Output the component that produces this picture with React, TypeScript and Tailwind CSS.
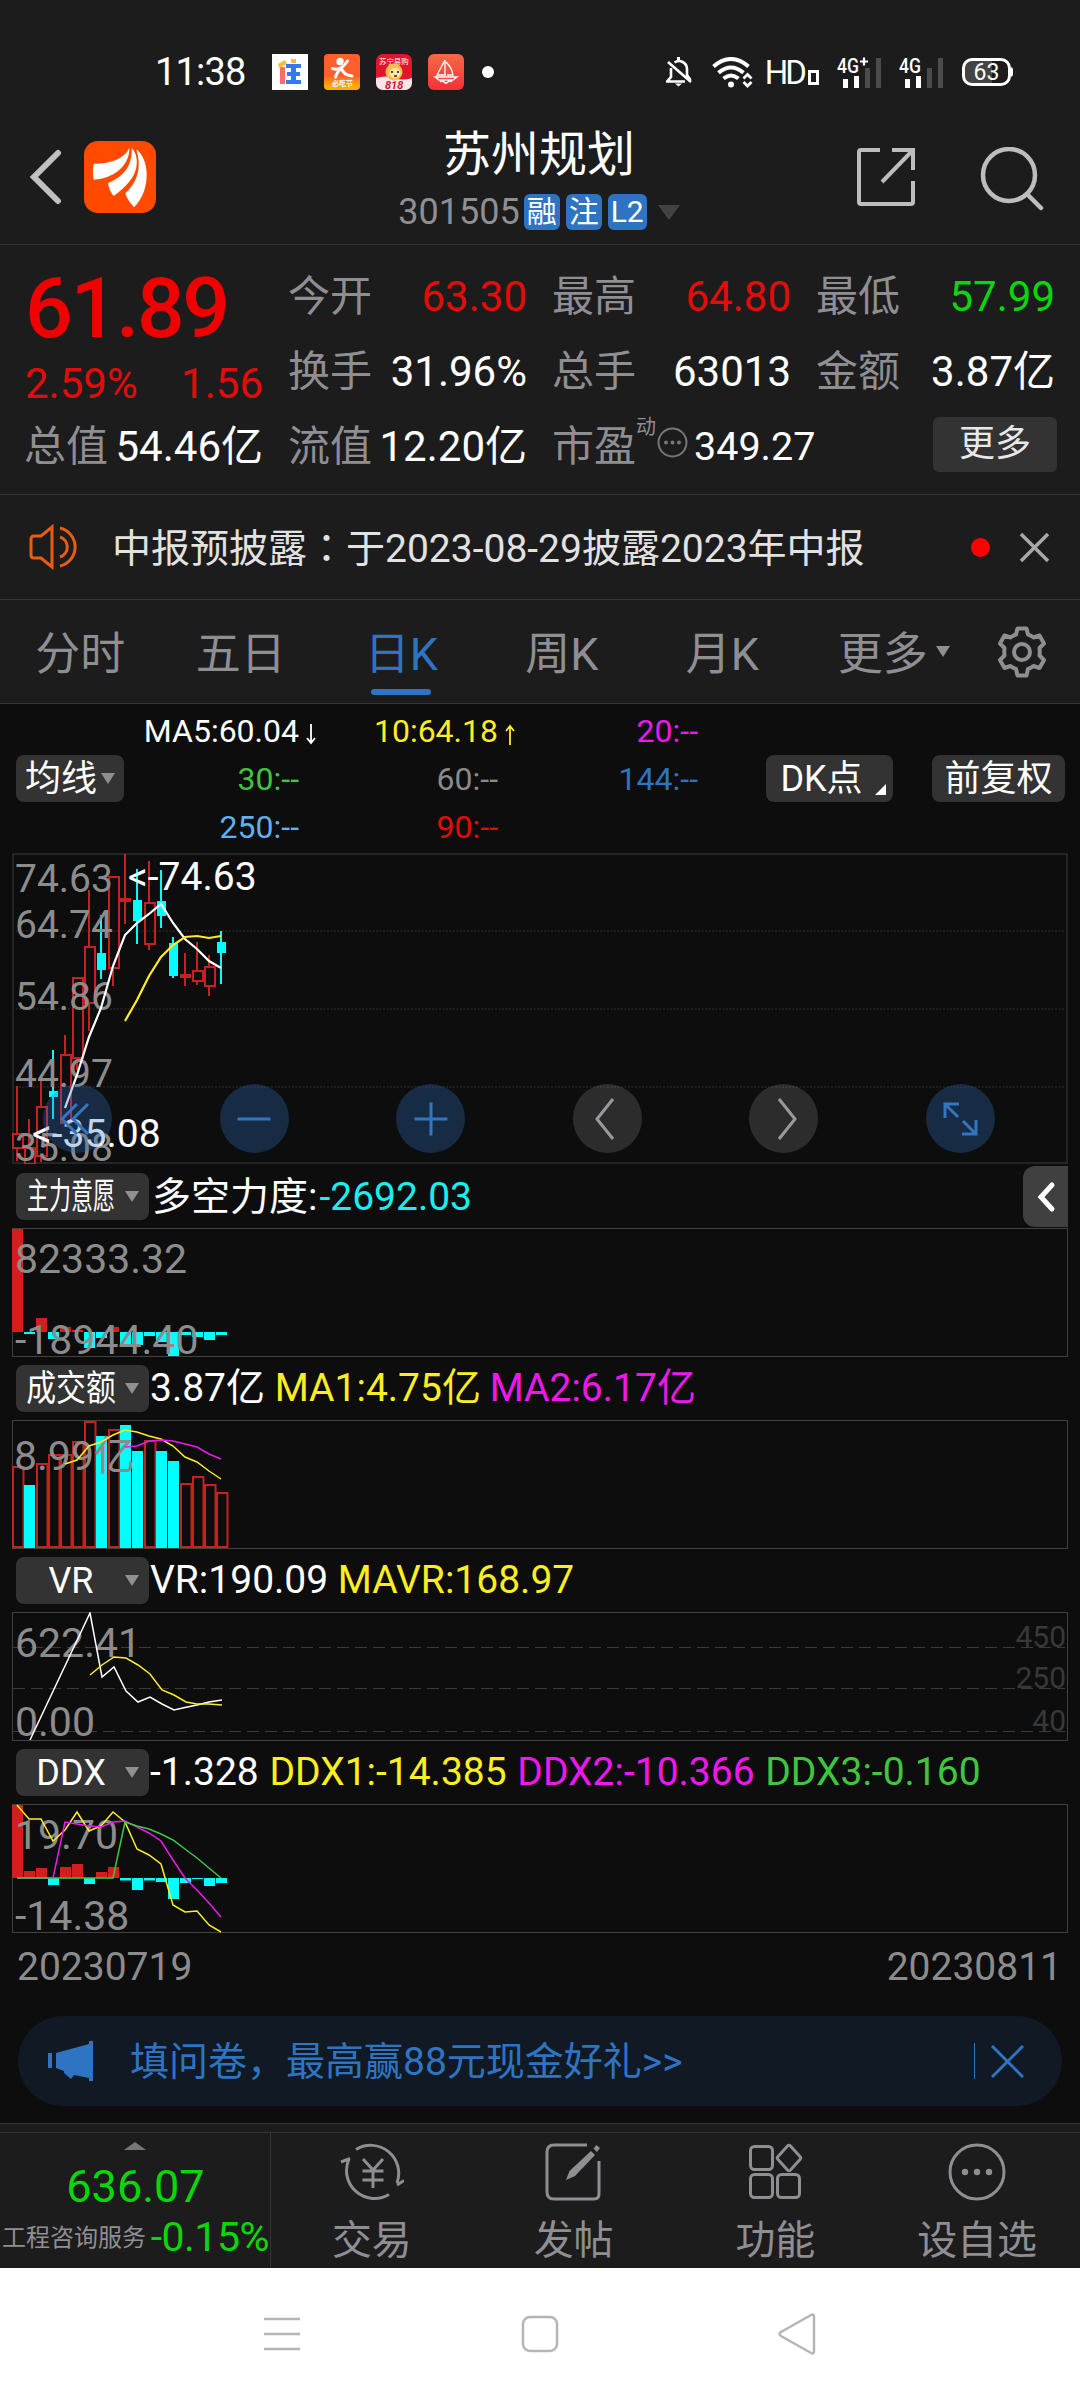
import type { ReactNode } from "react";

type Bar = { up: boolean; h: number };

// [high, low, top, bottom, kind]
const candles: [number, number, number, number, "up" | "down" | "flat"][] = [
  [233, 308, 280, 295, "up"],
  [266, 311, 294, 311, "up"],
  [228, 309, 253, 303, "up"],
  [197, 266, 238, 244, "down"],
  [182, 270, 201, 270, "up"],
  [124, 217, 124, 205, "up"],
  [37, 178, 93, 150, "up"],
  [62, 126, 100, 117, "down"],
  [23, 133, 23, 115, "up"],
  [1, 71, 45, 49, "flat"],
  [16, 91, 47, 68, "down"],
  [8, 97, 49, 91, "up"],
  [17, 75, 48, 63, "down"],
  [84, 125, 90, 123, "down"],
  [100, 133, 121, 125, "flat"],
  [89, 132, 117, 128, "up"],
  [102, 143, 113, 133, "up"],
  [78, 131, 89, 100, "down"],
];

const ma5 = [255, 222, 184, 155, 113, 82, 70, 61, 51, 70, 86, 96, 108, 115];
const ma10 = [168, 147, 123, 104, 92, 84, 83, 85, 83];

const force = [103, -2, 14, -7, 5, 2, -16, -6, 5, -13, -13, -4, -10, -24, -3, -5, -8, -3];
const ddx = [73, 7, 10, -7, 11, 14, -6, 6, 11, -2.5, -12, -2.5, -4, -21, -5, -1, -8, -5];

const amount: Bar[] = [
  { up: true, h: 46 },
  { up: false, h: 65 },
  { up: true, h: 43 },
  { up: true, h: 34 },
  { up: true, h: 34 },
  { up: true, h: 21 },
  { up: true, h: 1 },
  { up: false, h: 16 },
  { up: true, h: 9 },
  { up: false, h: 5 },
  { up: false, h: 31 },
  { up: true, h: 20 },
  { up: false, h: 31 },
  { up: false, h: 41 },
  { up: true, h: 63 },
  { up: true, h: 56 },
  { up: true, h: 64 },
  { up: true, h: 72 },
];

// one trading day is 12px wide
const line = (ys: number[], start: number) =>
  ys.map((y, i) => `${5 + (start + i) * 12},${y}`).join(" ");

function Tri({ className = "" }: { className?: string }) {
  return (
    <svg viewBox="0 0 14 11" className={`h-[11px] w-[14px] ${className}`}>
      <path d="M0 0h14L7 11z" fill="currentColor" />
    </svg>
  );
}

function StatusBar() {
  return (
    <div className="flex h-[144px] items-center justify-between pr-[69px] pl-[155px] text-white">
      <div className="flex items-center">
        <span className="w-[117px] text-[38px] leading-none tracking-[-0.8px]">
          11:38
        </span>
        <div className="flex items-center gap-4">
          <svg width="36" height="36" viewBox="0 0 36 36">
            <path d="M0 0h36v36H0z" fill="#fff" />
            <path d="M8 13h5v17H8z" fill="#ff6b6b" />
            <path d="m6 10 7-4 2 4-8 4zM19 5h5v4h-5z" fill="#ffb938" />
            <path
              d="M14 10h15v4h-5v4h4v4h-4v4h5v4H14v-4h5v-4h-4v-4h4v-4h-5z"
              fill="#3578f6"
            />
          </svg>
          <svg width="36" height="36" viewBox="0 0 36 36">
            <defs>
              <linearGradient id="eat" x1="0" y1="0" x2="0" y2="1">
                <stop offset=".6" stopColor="#ff5f2c" />
                <stop offset=".9" stopColor="#ffae00" />
              </linearGradient>
            </defs>
            <rect width="36" height="36" rx="4" fill="url(#eat)" />
            <circle cx="16" cy="7.5" r="3.7" fill="#fff" />
            <path
              d="M8.500 14.500q8 3 15-7.500M11.500 23q2-6 6-8.500 2 6.500 10.500 7.500"
              fill="none"
              stroke="#fff"
              strokeWidth="3"
              strokeLinecap="round"
            />
            <text x="8" y="32" fontSize="7" fontWeight="700" fill="#fff">
              必吃节
            </text>
          </svg>
          <svg width="36" height="36" viewBox="0 0 36 36">
            <rect width="36" height="36" rx="7" fill="#e3152c" />
            <path d="M0 24q9-3 18 0t18 0v5a7 7 0 0 1-7 7H7a7 7 0 0 1-7-7z" fill="#fde4ea" />
            <text x="3" y="9.5" fontSize="7.4" fill="#fff">
              苏宁易购
            </text>
            <circle cx="18" cy="18" r="8.5" fill="#f5c04c" />
            <ellipse cx="19" cy="19" rx="5.5" ry="5" fill="#ffe6b0" />
            <path d="M16 17v2M22 17v2M18 22h3" stroke="#3a1c10" strokeWidth="1.6" />
            <text x="9" y="35" fontSize="11" fontWeight="700" fontStyle="italic" fill="#d5162f">
              818
            </text>
          </svg>
          <svg width="36" height="36" viewBox="0 0 36 36">
            <defs>
              <linearGradient id="sail" x1="0" y1="0" x2="0" y2="1">
                <stop stopColor="#f46a45" />
                <stop offset="1" stopColor="#f5303a" />
              </linearGradient>
            </defs>
            <rect width="36" height="36" rx="6" fill="url(#sail)" />
            <path
              d="M17 6v15M17 6l-8 15h9M18 8q6 6 7 13h-6M7 23h22l-4 3H11zM12 28q2-2 4 0t4 0 4 0"
              fill="none"
              stroke="#fff"
              strokeWidth="1.3"
            />
          </svg>
        </div>
        <i className="ml-[18px] size-3 rounded-full bg-white" />
      </div>
      <div className="flex items-center">
        <svg width="26" height="30" viewBox="0 0 26 30" fill="none" stroke="#fff" strokeWidth="2.6">
          <path d="M8.5 5.5A8 8 0 0 1 21 12v6l3.500 5M5 11v9l-4 4.500h18M2 5l23 20" />
          <path d="M12.500 0v4" strokeWidth="3" />
          <path d="M9 26.500h7l-3.500 3z" fill="#fff" stroke="none" />
        </svg>
        <svg className="ml-[20px]" width="41" height="31" viewBox="0 0 41 31" fill="none" stroke="#fff" strokeWidth="4">
          <path d="M1.500 9.500q17.500-15 35 0M6.500 15.800q12.500-10.500 25 0M11.500 21.500q7.500-6 15 0" />
          <circle cx="19" cy="27.500" r="3" fill="#fff" stroke="none" />
          <path d="m31.500 21.500 4-4 4 4M31.500 25l4 4 4-4" strokeWidth="2.800" />
        </svg>
        <span className="ml-[12px] text-[33px] leading-none tracking-[-3px]">
          HD
        </span>
        <i className="mt-[10px] ml-[4px] h-[15px] w-[11px] border-[3.5px] border-white" />
        <Signal label="4G" plus />
        <Signal label="4G" />
        <div className="relative ml-[19px] flex h-[28px] w-[49px] items-center justify-center rounded-[10px] border-[3px] border-white bg-[linear-gradient(90deg,#444_62%,transparent_62%)] text-[23px] leading-none">
          63
          <i className="absolute -right-[5px] h-[10px] w-[3px] rounded-r bg-white" />
        </div>
      </div>
    </div>
  );
}

function Signal({ label, plus }: { label: string; plus?: boolean }) {
  return (
    <svg className="ml-[18px]" width="44" height="32" viewBox="0 0 44 32">
      <text x="0" y="17" fontSize="20" fontWeight="500" fill="#fff" textLength="22" lengthAdjust="spacingAndGlyphs">
        {label}
      </text>
      {plus && <path d="M23 5.500h8M27 1.500v8" stroke="#fff" strokeWidth="2.200" />}
      <path d="M8.500 23v9M19.500 20v12" stroke="#fff" strokeWidth="5" />
      <path d="M30.500 12v20M41.500 2v30" stroke="#4b4b4b" strokeWidth="5" />
    </svg>
  );
}

function Header() {
  return (
    <div className="flex h-[101px] items-center justify-between border-b border-[#343434] pr-9 pl-[29px]">
      <div className="flex w-[229px] items-center pb-[35px]">
        <svg width="33" height="56" viewBox="0 0 33 56">
          <path
            d="M29 4 5 28l24 24"
            fill="none"
            stroke="#c0c0c0"
            strokeWidth="6"
            strokeLinecap="round"
          />
        </svg>
        <svg className="ml-[22px]" width="72" height="72" viewBox="0 0 216 216">
          <rect width="216" height="216" rx="42" fill="#ff4a00" />
          <path
            d="M29 68C75 68 120 56 136 20c2 50-42 92-107 96-3-17-3-32 0-48zM143 21c14 14 18 36 14 58-6 32-30 58-68 86-10-12-15-25-17-39 45-18 74-50 71-105zM157 25c18 14 30 40 31 72 1 38-10 74-38 102-12-14-22-26-26-42 36-32 50-76 33-132z"
            fill="#fff"
          />
        </svg>
      </div>
      <div className="flex flex-col items-center pr-[2px] pb-[31px]">
        <h1 className="text-[48px] leading-[56px] text-white">苏州规划</h1>
        <div className="mt-[11px] flex items-center leading-none">
          <span className="text-[36px] text-[#8e8e93]">301505</span>
          <span className="ml-[4px] flex gap-[6px] text-[30px] text-white">
            <b className="flex h-[36px] w-[36px] items-center justify-center rounded-md bg-[#2e74c2] font-normal">
              融
            </b>
            <b className="flex h-[36px] w-[36px] items-center justify-center rounded-md bg-[#2e74c2] font-normal">
              注
            </b>
            <b className="flex h-[36px] w-[39px] items-center justify-center rounded-md bg-[#2e74c2] font-normal">
              L2
            </b>
          </span>
          <svg className="ml-[11px]" width="22" height="15" viewBox="0 0 22 15">
            <path d="M0 0h22L11 15z" fill="#424242" />
          </svg>
        </div>
      </div>
      <div className="flex w-[222px] items-center justify-end gap-[65px] pb-[35px]">
        <svg width="58" height="58" viewBox="0 0 58 58" fill="none" stroke="#bdbdbd" strokeWidth="4">
          <path d="M23 2H4Q2 2 2 4v50q0 2 2 2h50q2 0 2-2V33M35 2h21v20M56 2 25 34" />
        </svg>
        <svg className="mt-[4px]" width="64" height="64" viewBox="0 0 64 64" fill="none" stroke="#bdbdbd" strokeWidth="4.500">
          <circle cx="29" cy="28" r="26" />
          <path d="m47 47 14 14" strokeLinecap="round" />
        </svg>
      </div>
    </div>
  );
}

function Cell({
  label,
  value,
  color = "text-white",
}: {
  label: string;
  value: string;
  color?: string;
}) {
  return (
    <div className="flex h-[75px] items-center justify-between whitespace-nowrap">
      <span className="-ml-px text-[#8e8e93]">{label}</span>
      <span className={color}>{value}</span>
    </div>
  );
}

function Quote() {
  return (
    <div className="grid h-[250px] grid-cols-4 content-start gap-x-[26px] border-b border-[#343434] px-[25px] pt-[14px] text-[42px] leading-none">
      <div className="row-span-2 flex flex-col text-[#e30c0c]">
        <span className="pt-[8px] text-[84px] font-medium tracking-[-2.3px] text-[#f00000]">
          61.89
        </span>
        <div className="mt-[12px] flex justify-between">
          <span>2.59%</span>
          <span>1.56</span>
        </div>
      </div>
      <Cell label="今开" value="63.30" color="text-[#e30c0c]" />
      <Cell label="最高" value="64.80" color="text-[#e30c0c]" />
      <Cell label="最低" value="57.99" color="text-[#0bd60b]" />
      <Cell label="换手" value="31.96%" />
      <Cell label="总手" value="63013" />
      <Cell label="金额" value="3.87亿" />
      <Cell label="总值" value="54.46亿" />
      <Cell label="流值" value="12.20亿" />
      <div className="flex h-[75px] items-center whitespace-nowrap">
        <span className="-ml-px text-[#8e8e93]">市盈</span>
        <span className="-mt-[40px] text-[20px] text-[#8e8e93]">动</span>
        <svg className="-mt-[8px] ml-[1px] shrink-0" width="31" height="31" viewBox="0 0 31 31" fill="#77777b">
          <circle cx="15.500" cy="15.500" r="14" fill="none" stroke="#77777b" strokeWidth="2" />
          <circle cx="9" cy="15.500" r="2" />
          <circle cx="15.500" cy="15.500" r="2" />
          <circle cx="22" cy="15.500" r="2" />
        </svg>
        <span className="ml-[6px] text-[39.500px] text-white">349.27</span>
      </div>
      <div className="flex h-[75px] items-center justify-end">
        <button className="-mt-[5px] -mr-[2px] h-[55px] w-[124px] rounded-md bg-[#333] text-[36px] leading-none text-[#e8e8e8]">
          更多
        </button>
      </div>
    </div>
  );
}

function Notice() {
  return (
    <div className="flex h-[105px] items-center border-b border-[#343434] pr-[30px] pl-[29px]">
      <svg width="52" height="46" viewBox="0 0 52 46" fill="none" stroke="#e85d10" strokeWidth="3">
        <path d="M23 3v40L12 34H5q-3 0-3-3V15q0-3 3-3h7zM31 4a19.500 19.500 0 0 1 0 38M31 13a10.500 10.500 0 0 1 0 20" />
      </svg>
      <span className="ml-[31px] flex-1 text-[39px] leading-none text-[#e2e2e2]">
        中报预披露<span className="font-['Noto_Sans_CJK_TC']">：</span>
        于2023-08-29披露2023年中报
      </span>
      <i className="size-[19px] rounded-full bg-[#ff0000]" />
      <svg className="ml-[29px]" width="31" height="31" viewBox="0 0 31 31">
        <path d="m2 2 27 27M29 2 2 29" stroke="#a8a8a8" strokeWidth="3.500" />
      </svg>
    </div>
  );
}

function Tabs() {
  return (
    <div className="flex h-[104px] items-center border-b border-[#343434] text-[45px] leading-none text-[#8e8e93]">
      {["分时", "五日", "日K", "周K", "月K", "更多"].map((t) => (
        <div
          key={t}
          className={`relative flex h-full w-[160.500px] items-center justify-center pt-[5px] ${t === "日K" ? "text-[#2e74c2]" : ""}`}
        >
          {t}
          {t === "日K" && (
            <i className="absolute bottom-[8px] h-[6px] w-[60px] rounded-full bg-[#2e74c2]" />
          )}
          {t === "更多" && <Tri className="absolute right-[13px] bottom-[46px]" />}
        </div>
      ))}
      <svg className="ml-[33px]" width="52" height="52" viewBox="0 0 52 52" fill="none" stroke="#8e8e93" strokeWidth="4" strokeLinejoin="round">
        <path d="M21.500 2.500h9l1.500 6q3 1 5.500 3l6-2 4.500 8-4.500 4.500q.5 4 0 7.500l4.500 4.500-4.500 8-6-2q-2.500 2-5.500 3l-1.500 6.500h-9l-1.500-6.500q-3-1-5.500-3l-6 2-4.500-8L8.500 29.500q-.5-4 0-7.500L4 17.500l4.500-8 6 2q2.500-2 5.500-3z" />
        <circle cx="26" cy="26" r="8" />
      </svg>
    </div>
  );
}

function Arrow({ up }: { up?: boolean }) {
  return (
    <svg
      className="absolute top-[17px] left-full ml-[7px]"
      width="10"
      height="21"
      viewBox="0 0 10 21"
      fill="none"
      stroke="currentColor"
      strokeWidth="1.800"
    >
      <path d={up ? "M5 21V2M1 7l4-5 4 5" : "M5 0v19M1 14l4 5 4-5"} />
    </svg>
  );
}

function Legend() {
  return (
    <div className="flex h-[149px] items-center pl-4 leading-none text-white">
      <button className="flex h-[47px] w-[108px] items-center rounded-lg bg-[#333] pl-[9px] text-[36px] leading-none">
        均线
        <Tri className="ml-[4px] text-[#8e8e93]" />
      </button>
      <div className="grid grid-cols-[175px_199px_200px] text-right text-[32px] leading-[48px]">
        <span className="relative">
          MA5:60.04
          <Arrow />
        </span>
        <span className="relative text-[#fcee21]">
          10:64.18
          <Arrow up />
        </span>
        <span className="text-[#ee18ee]">20:--</span>
        <span className="text-[#3fc63f]">30:--</span>
        <span className="text-[#8a8a8a]">60:--</span>
        <span className="text-[#2e74c2]">144:--</span>
        <span className="text-[#5fb0f0]">250:--</span>
        <span className="text-[#e30c0c]">90:--</span>
      </div>
      <button className="relative ml-[68px] h-[47px] w-[127px] rounded-lg bg-[#333] pr-[16px] text-[36px] leading-none">
        DK点
        <svg className="absolute right-[7px] bottom-[7px]" width="11" height="11" viewBox="0 0 11 11">
          <path d="M11 0v11H0z" fill="#fff" />
        </svg>
      </button>
      <button className="ml-[39px] h-[47px] w-[133px] rounded-lg bg-[#333] text-[36px] leading-none">
        前复权
      </button>
    </div>
  );
}

function Round({ blue, d }: { blue?: boolean; d: string }) {
  return (
    <button
      className={`flex size-[69px] items-center justify-center rounded-full ${blue ? "bg-[#2e74c2]/30 text-[#3375bf]" : "bg-white/13 text-[#9a9a9e]"}`}
    >
      <svg width="42" height="42" viewBox="0 0 42 42" fill="none" stroke="currentColor" strokeWidth="3">
        <path d={d} />
      </svg>
    </button>
  );
}

function KChart() {
  return (
    <div className="relative mx-3 h-[311px]">
      <svg className="block text-[39px]" width="1056" height="311" viewBox="0 0 1056 311">
        <rect x="1" y="1" width="1054" height="309" fill="none" stroke="#242424" strokeWidth="2" />
        <path
          d="M0 78h1056M0 156h1056M0 234h1056"
          stroke="#242424"
          strokeWidth="1.500"
          strokeDasharray="2 1.500"
        />
        {candles.map(([hi, lo, top, bot, kind], i) => {
          const x = 5 + i * 12;
          if (kind === "up")
            return (
              <g key={i} stroke="#c72020" strokeWidth="2" fill="none">
                <path d={`M${x} ${hi}V${top}M${x} ${bot}V${lo}`} />
                <rect x={x - 4} y={top + 1} width="10" height={bot - top - 1} />
              </g>
            );
          return (
            <g key={i} fill={kind === "flat" ? "#c72020" : "#00ffff"}>
              <rect x={x - 1} y={hi} width="2" height={lo - hi} />
              <rect x={x - (kind === "flat" ? 5 : 4)} y={top} width={kind === "flat" ? 11 : 9} height={bot - top} />
            </g>
          );
        })}
        <g fill="#8c8c8c">
          <text x="3" y="39">74.63</text>
          <text x="3" y="85">64.74</text>
          <text x="3" y="157">54.86</text>
          <text x="3" y="234">44.97</text>
          <text x="3" y="308">35.08</text>
        </g>
        <polyline points={line(ma5, 4)} fill="none" stroke="#fff" strokeWidth="2.200" />
        <polyline points={line(ma10, 9)} fill="none" stroke="#fcee21" strokeWidth="2.200" />
        <text x="116" y="37" fill="#fff">&lt;-74.63</text>
        <text x="20" y="294" fill="#fff">&lt;-35.08</text>
      </svg>
      <div className="absolute top-[231px] right-[73px] left-[31px] flex justify-between">
        <Round blue d="M20 6 5 21l15 15M31 6 16 21l15 15" />
        <Round blue d="M4.500 21h33" />
        <Round blue d="M4.500 21h33M21 4.500v33" />
        <Round d="M27 1 11 21 27 41" />
        <Round d="M16 1l16 20-16 20" />
        <Round blue d="M6 20V6h14M6 6l13 13M37 22v14H23M37 36 24 23" />
      </div>
    </div>
  );
}

function PanelHead({
  name,
  squeeze = "",
  first,
  children,
}: {
  name: string;
  squeeze?: string;
  first?: boolean;
  children: ReactNode;
}) {
  return (
    <div className={`flex items-center pl-4 text-[39px] leading-none whitespace-pre text-white ${first ? "h-[64px] pt-[1px]" : "h-[63px]"}`}>
      <button className="mr-px flex h-[47px] w-[133px] items-center rounded-lg bg-[#333] pl-[10px] text-[36px] leading-none">
        <span className="flex w-[90px] justify-center">
          <span className={`shrink-0 ${squeeze}`}>{name}</span>
        </span>
        <Tri className="ml-[9px] text-[#8e8e93]" />
      </button>
      {children}
    </div>
  );
}

function Panel({ children }: { children: ReactNode }) {
  return (
    <svg className="mx-3 block text-[41px]" width="1056" height="129" viewBox="0 0 1056 129">
      <rect x=".5" y=".5" width="1055" height="128" fill="none" stroke="#424242" />
      {children}
    </svg>
  );
}

function SignedBars({ data, zero }: { data: number[]; zero: number }) {
  return (
    <>
      {data.map((v, i) => (
        <rect
          key={i}
          x={i * 12}
          y={v > 0 ? zero - v : zero}
          width="11"
          height={Math.abs(v)}
          fill={v > 0 ? "#d41e1e" : "#00ffff"}
        />
      ))}
    </>
  );
}

function Charts() {
  return (
    <div className="bg-[#0d0d0d]">
      <Legend />
      <KChart />

      <PanelHead name="主力意愿" squeeze="scale-x-[.61]" first>
        <span className="ml-[2px] pt-[2px]">多空力度:</span>
        <span className="ml-[2px] flex-1 pt-[1px] text-[#18efef]">-2692.03</span>
        <button className="mr-3 flex h-[61px] w-[45px] items-center justify-center rounded-l-xl bg-[#404040]">
          <svg width="20" height="32" viewBox="0 0 20 32">
            <path d="M16 4 5 16l11 12" fill="none" stroke="#fff" strokeWidth="5" strokeLinecap="round" />
          </svg>
        </button>
      </PanelHead>
      <Panel>
        <SignedBars data={force} zero={104} />
        <g fill="#8c8c8c">
          <text x="3" y="45">82333.32</text>
          <text x="3" y="126">-18944.40</text>
        </g>
      </Panel>

      <PanelHead name="成交额" squeeze="scale-x-[.83]">
        <span>3.87亿</span>
        <span className="text-[#fcee21]"> MA1:4.75亿</span>
        <span className="-ml-px text-[#ee18ee]"> MA2:6.17亿</span>
      </PanelHead>
      <Panel>
        {amount.map(({ up, h }, i) =>
          up ? (
            <rect key={i} x={i * 12 + 1} y={h + 1} width="10.500" height={126 - h} fill="none" stroke="#c72020" strokeWidth="2" />
          ) : (
            <rect key={i} x={i * 12} y={h} width="11" height={128 - h} fill="#00ffff" />
          ),
        )}
        <text x="2" y="50" fill="#8c8c8c">8.99亿</text>
        <polyline
          points={line([44, 40, 26, 22, 15, 10, 12, 16, 19, 26, 37, 42, 51, 59], 4)}
          fill="none"
          stroke="#fcee21"
          strokeWidth="1.500"
        />
        <polyline
          points={line([27, 26, 21, 20, 21, 24, 27, 34, 39], 9)}
          fill="none"
          stroke="#ee18ee"
          strokeWidth="1.500"
        />
      </Panel>

      <PanelHead name="VR">
        <span>VR:190.09</span>
        <span className="text-[#fcee21]"> MAVR:168.97</span>
      </PanelHead>
      <Panel>
        <path
          d="M1 35.500h1052M1 76.500h1052M1 119.500h1052"
          stroke="#3a3a3a"
          strokeDasharray="12 6"
        />
        <g fill="#8c8c8c">
          <text x="3" y="45">622.41</text>
          <text x="3" y="124">0.00</text>
        </g>
        <g fill="#383838" fontSize="30" textAnchor="end">
          <text x="1054" y="35">450</text>
          <text x="1054" y="76">250</text>
          <text x="1054" y="119">40</text>
        </g>
        <polyline
          points="18,128 78,1 90,65 102,55 114,79 126,90 138,85 150,92 162,98 173,95.500 185,93 197,90 210,88"
          fill="none"
          stroke="#fff"
          strokeWidth="1.500"
        />
        <polyline
          points="78,63 90,53 102,45 114,46 126,53 138,62 150,78 162,83 174,90 185,92 197,92 210,93"
          fill="none"
          stroke="#fcee21"
          strokeWidth="1.500"
        />
      </Panel>

      <PanelHead name="DDX">
        <span>-1.328</span>
        <span className="ml-px text-[#fcee21]"> DDX1:-14.385</span>
        <span className="ml-px text-[#ee18ee]"> DDX2:-10.366</span>
        <span className="ml-px text-[#3fc63f]"> DDX3:-0.160</span>
      </PanelHead>
      <Panel>
        <SignedBars data={ddx} zero={74} />
        <g fill="#8c8c8c">
          <text x="3" y="45">19.70</text>
          <text x="3" y="126">-14.38</text>
        </g>
        <g fill="none" strokeWidth="1.500">
          <polyline
            stroke="#fcee21"
            points={line([1, 15, 15, 37, 26, 8, 27, 22, 8, 18, 45, 51, 60, 101, 108, 107, 121, 128], 0)}
          />
          <polyline
            stroke="#ee18ee"
            points={line([74, 74, 74, 74, 18, 20, 22, 23, 18, 17, 23, 29, 37, 56, 74, 86, 99, 113], 0)}
          />
          <polyline
            stroke="#3fc63f"
            points={line([74, 74, 74, 74, 74, 74, 74, 74, 74, 18, 22, 25, 30, 36, 45, 54, 64, 74], 0)}
          />
        </g>
      </Panel>

      <div className="flex h-[67px] items-center justify-between pt-[2px] pr-[18px] pl-[17px] text-[39px] leading-none text-[#8c8c8c]">
        <span>20230719</span>
        <span>20230811</span>
      </div>

      <div className="px-[18px] pt-4 pb-[17px]">
        <div className="flex h-[90px] items-center rounded-full bg-[#111a24] pr-[38px] pl-[30px] text-[#2e74c2]">
          <svg width="46" height="40" viewBox="0 0 46 40" fill="currentColor">
            <path d="M0 12h4v15H0zM8 12 41 3V0h4v40h-4v-3l-15-3-3 4-7-6v-2l-8-3z" />
          </svg>
          <span className="ml-[36px] flex-1 pt-[3px] text-[39px] leading-none">
            填问卷，最高赢88元现金好礼&gt;&gt;
          </span>
          <i className="h-[36px] w-px bg-[#2e74c2]" />
          <svg className="ml-[16px]" width="33" height="33" viewBox="0 0 33 33">
            <path d="m1 1 31 31M32 1 1 32" stroke="currentColor" strokeWidth="3" />
          </svg>
        </div>
      </div>
    </div>
  );
}

function NavItem({ label, children }: { label: string; children: ReactNode }) {
  return (
    <div className="flex flex-1 flex-col items-center pt-[8px] text-[40px] leading-none text-[#8e8e93]">
      <svg width="64" height="62" viewBox="0 0 64 62" fill="none" stroke="currentColor" strokeWidth="3">
        {children}
      </svg>
      <span className="mt-[18px]">{label}</span>
    </div>
  );
}

function BottomBar() {
  return (
    <>
      <div className="h-[9px] border-t border-[#343434]" />
      <div className="flex h-[136px] border-t border-[#343434] pr-[2px]">
        <div className="flex w-[271px] flex-col items-center border-r border-[#343434] leading-none">
          <svg className="mt-[9px]" width="22" height="8" viewBox="0 0 22 8">
            <path d="M0 8 11 0l11 8z" fill="#77777b" />
          </svg>
          <span className="mt-[14px] pl-[1px] text-[45px] text-[#0bd60b]">636.07</span>
          <div className="mt-[8px] flex w-full items-center justify-between pr-[1px] pl-[2px] whitespace-nowrap">
            <span className="text-[24px] text-[#8e8e93]">工程咨询服务</span>
            <span className="text-[41px] tracking-[-0.5px] text-[#0bd60b]">-0.15%</span>
          </div>
        </div>
        <NavItem label="交易">
          <path d="M16 8.500A28 28 0 0 1 57 42M49 53.500A28 28 0 0 1 9 18M1 21l9-3.500M57 44l7-4.500" />
          <path d="m23 18 10 11 10-11M33 29v18M22.500 30h21M22.500 39h21" />
        </NavItem>
        <NavItem label="发帖">
          <path d="M45 4H12q-7 0-7 7v40q0 7 7 7h40q5 0 5-5V20" />
          <path d="M24 39l3.500-9L49 10l4 4-20 21zM51.500 7.500l3-3.500 3.500 3-3 4z" fill="currentColor" stroke="none" />
        </NavItem>
        <NavItem label="功能">
          <rect x="7.500" y="5.500" width="22" height="23" rx="4" />
          <rect x="7.500" y="33.500" width="22" height="23" rx="4" />
          <rect x="34.500" y="33.500" width="22" height="23" rx="4" />
          <path d="M44.500 5q1.500-1.500 3 0L57 15.500q1.500 1.500 0 3L47.500 29q-1.500 1.500-3 0L35 18.500q-1.500-1.500 0-3z" />
        </NavItem>
        <NavItem label="设自选">
          <circle cx="32" cy="31" r="27" />
          <g fill="currentColor" stroke="none">
            <circle cx="20" cy="31" r="3.200" />
            <circle cx="32" cy="31" r="3.200" />
            <circle cx="44" cy="31" r="3.200" />
          </g>
        </NavItem>
      </div>
    </>
  );
}

function SystemNav() {
  return (
    <div className="flex h-[132px] items-center justify-between bg-white px-[262px]">
      <svg width="40" height="44" viewBox="0 0 40 44" stroke="#b5b5b5" strokeWidth="2.500">
        <path d="M2 7h36M2 22h36M2 37h36" />
      </svg>
      <svg width="40" height="44" viewBox="0 0 40 44" fill="none" stroke="#b5b5b5" strokeWidth="2.500">
        <rect x="3" y="5" width="34" height="34" rx="7" />
      </svg>
      <svg width="40" height="44" viewBox="2 0 40 44" fill="none" stroke="#b5b5b5" strokeWidth="2.500">
        <path d="M35 3q3-1.500 3 2v34q0 3.500-3 2L5 24q-3-2 0-4z" />
      </svg>
    </div>
  );
}

export default function App() {
  return (
    <div className="flex h-[2400px] w-[1080px] flex-col overflow-hidden bg-[#1c1c1c] font-['Roboto','Noto_Sans_CJK_SC',sans-serif]">
      <StatusBar />
      <Header />
      <Quote />
      <Notice />
      <Tabs />
      <Charts />
      <BottomBar />
      <SystemNav />
    </div>
  );
}
